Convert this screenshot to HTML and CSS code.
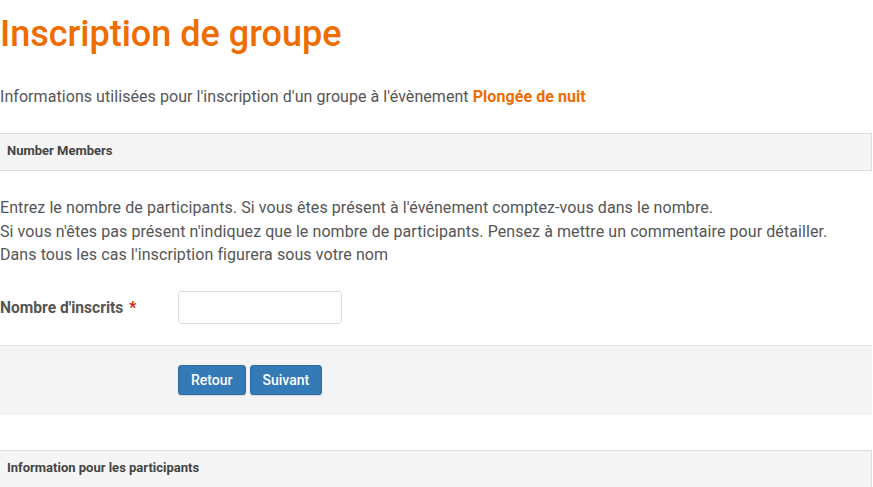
FILE: index.html
```html
<!DOCTYPE html>
<html lang="fr">
<head>
<meta charset="utf-8">
<title>Inscription de groupe</title>
<link rel="stylesheet" href="styles.css">
</head>
<body>
<div class="page">
  <h1 class="title">Inscription de groupe</h1>
  <p class="intro">Informations utilisées pour l'inscription d'un groupe à l'évènement <strong class="event">Plongée de nuit</strong></p>

  <section class="panel">
    <div class="panel-heading">Number Members</div>
  </section>

  <div class="help">
    <p>Entrez le nombre de participants. Si vous êtes présent à l'événement comptez-vous dans le nombre.</p>
    <p>Si vous n'êtes pas présent n'indiquez que le nombre de participants. Pensez à mettre un commentaire pour détailler.</p>
    <p>Dans tous les cas l'inscription figurera sous votre nom</p>
  </div>

  <div class="form-row">
    <label class="form-label" for="nb">Nombre d'inscrits <span class="req">*</span></label>
    <input class="form-input" id="nb" type="text">
  </div>

  <div class="actions">
    <div class="actions-inner">
      <button class="btn" type="button">Retour</button>
      <button class="btn" type="button">Suivant</button>
    </div>
  </div>

  <section class="panel panel-second">
    <div class="panel-heading">Information pour les participants</div>
  </section>
</div>
</body>
</html>
```

FILE: styles.css
```css
html, body {
  margin: 0;
  padding: 0;
  background: #fff;
}

body {
  font-family: Roboto, "Liberation Sans", Arial, sans-serif;
  color: #555;
  font-size: 16px;
}

.page {
  width: 872px;
  overflow: hidden;
}

.title {
  margin: 14px 0 0;
  font-size: 36px;
  line-height: 40px;
  font-weight: 500;
  color: #ef6c00;
}

.intro {
  margin: 32px 0 0;
  font-size: 16px;
  line-height: 21px;
  letter-spacing: 0.06px;
}

.event {
  color: #ef6c00;
  font-weight: 700;
}

.panel {
  margin-top: 26px;
  border: 1px solid #ddd;
  border-left: 0;
  background: #f5f5f5;
}

.panel-heading {
  padding: 8px 7px 11px;
  font-size: 13px;
  line-height: 17px;
  font-weight: 700;
  color: #444;
}

.help {
  margin-top: 25px;
}

.help p {
  margin: 0;
  font-size: 16px;
  line-height: 23.5px;
  letter-spacing: 0.08px;
}

.form-row {
  display: flex;
  align-items: center;
  margin-top: 24px;
}

.form-label {
  width: 178px;
  flex: none;
  font-weight: 700;
  font-size: 15.6px;
  line-height: 21px;
  padding-top: 2px;
}

.req {
  color: #e4170b;
  margin-left: 2px;
}

.form-input {
  box-sizing: border-box;
  width: 164px;
  height: 33px;
  border: 1px solid #ddd;
  border-radius: 3px;
  background: #fff;
  margin: 0;
  padding: 6px 10px;
  font: inherit;
}

.actions {
  margin-top: 21px;
  border-top: 1px solid #e3e3e3;
  background: #f4f4f4;
  padding: 19px 0 20px 178px;
}

.actions-inner {
  display: flex;
  gap: 4px;
}

.btn {
  box-sizing: border-box;
  height: 30px;
  padding: 0 12px;
  border: 1px solid #2e6da4;
  border-radius: 3px;
  background: #337ab7;
  color: #fff;
  font-family: Roboto, "Liberation Sans", Arial, sans-serif;
  font-size: 14px;
  line-height: 28px;
  font-weight: 500;
  box-shadow: 0 1px 1px rgba(0, 0, 0, 0.12);
}

.panel-second {
  margin-top: 35px;
}
```
